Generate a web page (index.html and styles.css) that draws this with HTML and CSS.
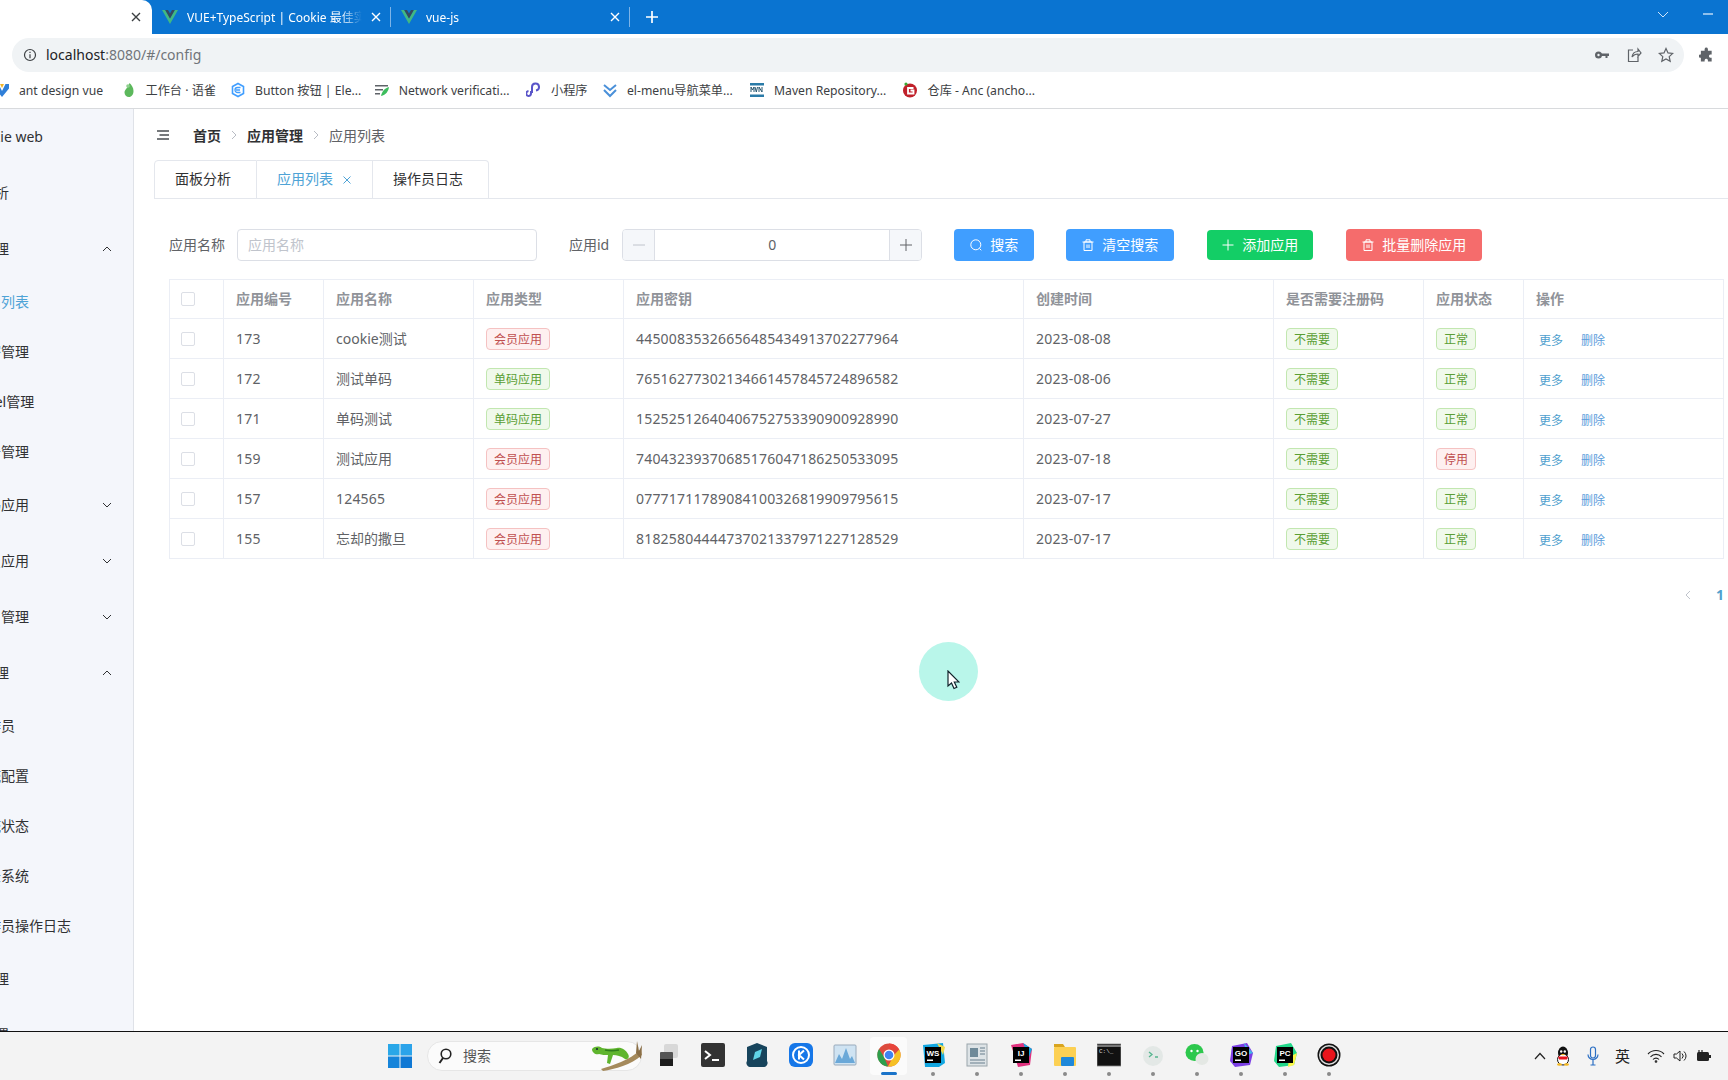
FILE: index.html
```html
<!DOCTYPE html>
<html lang="zh-CN">
<head>
<meta charset="utf-8">
<title>Cookie web</title>
<link rel="stylesheet" href="styles.css">
</head>
<body>
<div class="screen">
  <div class="tabstrip">
    <div class="ctab ctab-active"><svg class="ctab-x dark" viewBox="0 0 10 10"><path d="M1 1l8 8M9 1l-8 8"/></svg></div>
    <div class="ctab">
      <svg class="fav" viewBox="0 0 16 16"><path d="M0 1h3.2L8 9.4 12.800 1H16L8 15z" fill="#41b883"/><path d="M3.200 1h2.800L8 4.500 10 1h2.800L8 9.400z" fill="#35495e"/></svg>
      <span class="ctab-title">VUE+TypeScript | Cookie 最佳实践</span>
      <svg class="ctab-x" viewBox="0 0 10 10"><path d="M1 1l8 8M9 1l-8 8"/></svg>
    </div>
    <div class="ctab">
      <svg class="fav" viewBox="0 0 16 16"><path d="M0 1h3.2L8 9.4 12.800 1H16L8 15z" fill="#41b883"/><path d="M3.200 1h2.800L8 4.500 10 1h2.800L8 9.400z" fill="#35495e"/></svg>
      <span class="ctab-title">vue-js</span>
      <svg class="ctab-x" viewBox="0 0 10 10"><path d="M1 1l8 8M9 1l-8 8"/></svg>
    </div>
    <svg class="newtab" viewBox="0 0 12 12"><path d="M6 0v12M0 6h12"/></svg>
    <svg class="tabsearch" viewBox="0 0 10 6"><path d="M0 0l5 5 5-5"/></svg>
    <svg class="winmin" viewBox="0 0 10 2"><path d="M0 1h10"/></svg>
  </div>

  <div class="toolbar">
    <div class="omnibox">
      <svg class="ico-info" viewBox="0 0 14 14"><circle cx="7" cy="7" r="5.500"/><path d="M7 6.200v4M7 3.800v1.200"/></svg>
      <span class="url"><b>localhost</b>:8080/#/config</span>
      <div class="omni-actions">
        <svg class="omni-ico" viewBox="0 0 16 16"><circle cx="4.500" cy="8" r="3.500" fill="#5f6368"/><circle cx="4.500" cy="8" r="1.200" fill="#f0f3f5"/><path d="M7 6.500h8v2.500h-1.500v2h-2V9H7z" fill="#5f6368"/></svg>
        <svg class="omni-ico line" viewBox="0 0 16 16"><path d="M7 3H2.500v11.500H12V10"/><path d="M6 10c.5-3.500 3-5.500 6-5.500V2l3 4-3 3.500V7c-2.500 0-4.500 1-6 3z"/></svg>
        <svg class="omni-ico line" viewBox="0 0 16 16"><path d="M8 1.500l2 4.400 4.700.5-3.500 3.200 1 4.700L8 11.900l-4.200 2.400 1-4.700L1.300 6.400 6 5.900z"/></svg>
      </div>
    </div>
    <svg class="puzzle" viewBox="0 0 16 16"><path d="M6 1.500a1.800 1.800 0 0 1 3.500 0V3.500h4v4h-1.500a1.800 1.800 0 0 0 0 3.500h1.500v4h-4V13.500a1.800 1.800 0 0 0-3.500 0V15H2v-4H1a1.800 1.800 0 0 1 0-3.500h1v-4h4z" fill="#5f6368"/></svg>
  </div>

  <div class="bookmarks">
    <div class="bm"><svg class="bm-ico" viewBox="0 0 16 16"><path d="M1 2h3.500L8 9l3.500-7H15v4.500L8 15 1 6.500z" fill="#2f7fd8"/><path d="M6 2h4L8 6z" fill="#f0b429"/></svg><span>ant design vue</span></div>
    <div class="bm"><svg class="bm-ico" viewBox="0 0 16 16"><path d="M8.500 1c2 2 4 4.500 4 8s-2 6-4.500 6S3.500 13 3.500 10.500C3.500 7.500 7 6 8.500 1z" fill="#5cb85c"/><circle cx="7" cy="4" r="1.800" fill="#8fd18f"/></svg><span>工作台 · 语雀</span></div>
    <div class="bm"><svg class="bm-ico" viewBox="0 0 16 16"><path d="M8 1.500l5.500 3v7L8 14.500l-5.500-3v-7z" fill="none" stroke="#409eff" stroke-width="1.600"/><path d="M10.500 5.500H7.500a2.500 2.500 0 0 0 0 5h3M6 8h4" fill="none" stroke="#409eff" stroke-width="1.300"/></svg><span>Button 按钮 | Ele...</span></div>
    <div class="bm"><svg class="bm-ico" viewBox="0 0 16 16"><path d="M1 3h13v1.600H1zM1 7h8v1.600H1zM1 11h5v1.600H1z" fill="#5f6368"/><path d="M7 14c1-5 4-8 8-9-.5 4-3 8-8 9z" fill="#3dbd5d"/></svg><span>Network verificati...</span></div>
    <div class="bm"><svg class="bm-ico" viewBox="0 0 16 16"><path d="M3 14a2.500 2.500 0 0 1-.5-5M5 9v2.500A2.500 2.500 0 0 1 3 14M6 11V5a3.500 3.500 0 1 1 4 3.500" fill="none" stroke="#5a55c9" stroke-width="2"/></svg><span>小程序</span></div>
    <div class="bm"><svg class="bm-ico" viewBox="0 0 16 16"><path d="M2 3l6 5 6-5M2 8l6 6 6-6" fill="none" stroke="#4a90d9" stroke-width="2"/></svg><span>el-menu导航菜单...</span></div>
    <div class="bm"><svg class="bm-ico" viewBox="0 0 16 16"><rect x="1" y="1" width="14" height="14" fill="#fff"/><path d="M1 1h14v2.500H1zM1 12.500h14V15H1z" fill="#2a7ba8"/><path d="M2 10V5l1.500 3L5 5v5M6 5l1.300 5L8.500 5M10 10V5l3 5V5" fill="none" stroke="#27566f" stroke-width="1"/></svg><span>Maven Repository...</span></div>
    <div class="bm"><svg class="bm-ico" viewBox="0 0 16 16"><circle cx="8" cy="8.500" r="7" fill="#c0202a"/><path d="M11.500 6H6v5.500h5.500V8.500H8.500" fill="none" stroke="#fff" stroke-width="1.800"/><circle cx="4" cy="2" r="1.600" fill="#3aaa35"/></svg><span>仓库 - Anc (ancho...</span></div>
  </div>

  <div class="workspace">
    <aside class="sidebar">
      <nav class="menu">
        <div class="logo">Cookie web</div>
        <div class="mi">面板分析</div>
        <div class="mi">应用管理<svg class="chev" viewBox="0 0 10 6"><path d="M1 5l4-4 4 4"/></svg></div>
        <div class="si si-active">应用列表</div>
        <div class="si">卡密管理</div>
        <div class="si">Excel管理</div>
        <div class="si">公告管理</div>
        <div class="mi mi-deep">单码应用<svg class="chev" viewBox="0 0 10 6"><path d="M1 1l4 4 4-4"/></svg></div>
        <div class="mi mi-deep">会员应用<svg class="chev" viewBox="0 0 10 6"><path d="M1 1l4 4 4-4"/></svg></div>
        <div class="mi mi-deep">用户管理<svg class="chev" viewBox="0 0 10 6"><path d="M1 1l4 4 4-4"/></svg></div>
        <div class="mi">系统管理<svg class="chev" viewBox="0 0 10 6"><path d="M1 5l4-4 4 4"/></svg></div>
        <div class="si">操作员</div>
        <div class="si">系统配置</div>
        <div class="si">系统状态</div>
        <div class="si">登录系统</div>
        <div class="si">操作员操作日志</div>
        <div class="mi">权限管理</div>
        <div class="mi">系统设置</div>
      </nav>
    </aside>

    <main class="main">
      <div class="crumbs">
        <svg class="burger" viewBox="0 0 12 10"><path d="M0 1h12M2.500 5H12M0 9h12"/></svg>
        <b>首页</b>
        <svg class="crumb-sep" viewBox="0 0 6 10"><path d="M1 1l4 4-4 4"/></svg>
        <b>应用管理</b>
        <svg class="crumb-sep" viewBox="0 0 6 10"><path d="M1 1l4 4-4 4"/></svg>
        <span>应用列表</span>
      </div>

      <div class="pagetabs">
        <div class="ptab">面板分析</div>
        <div class="ptab ptab-active">应用列表<svg class="ptab-x" viewBox="0 0 8 8"><path d="M.5.5l7 7M7.500.5l-7 7"/></svg></div>
        <div class="ptab">操作员日志</div>
      </div>

      <div class="filters">
        <label class="flabel">应用名称</label>
        <div class="finput">应用名称</div>
        <label class="flabel flabel-next">应用id</label>
        <div class="fnum">
          <span class="fnum-btn fnum-l"><svg class="fnum-ico muted" viewBox="0 0 12 12"><path d="M0 6h12"/></svg></span>
          <span class="fnum-val">0</span>
          <span class="fnum-btn fnum-r"><svg class="fnum-ico" viewBox="0 0 12 12"><path d="M6 0v12M0 6h12"/></svg></span>
        </div>
        <div class="btns">
          <button class="btn btn-blue"><svg class="btn-ico" viewBox="0 0 12 12"><circle cx="5.800" cy="5.800" r="5"/><path d="M9.500 9.500l1.800 1.800"/></svg>搜索</button>
          <button class="btn btn-blue"><svg class="btn-ico" viewBox="0 0 12 12"><path d="M2 3h8v8.500H2zM.5 3h11M4 3V.8h4V3M5 5.500v3.500M7 5.500v3.500"/></svg>清空搜索</button>
          <button class="btn btn-green"><svg class="btn-ico" viewBox="0 0 12 12"><path d="M6 .5v11M.5 6h11"/></svg>添加应用</button>
          <button class="btn btn-red"><svg class="btn-ico" viewBox="0 0 12 12"><path d="M2 3h8v8.500H2zM.5 3h11M4 3V.8h4V3M5 5.500v3.500M7 5.500v3.500"/></svg>批量删除应用</button>
        </div>
      </div>

      <table class="grid">
        <colgroup>
          <col class="c54"><col class="c100"><col class="c150"><col class="c150"><col class="c400"><col class="c250"><col class="c150"><col class="c100"><col class="c200">
        </colgroup>
        <thead>
          <tr><th class="chk"><span class="box"></span></th><th>应用编号</th><th>应用名称</th><th>应用类型</th><th>应用密钥</th><th>创建时间</th><th>是否需要注册码</th><th>应用状态</th><th>操作</th></tr>
        </thead>
        <tbody>
          <tr><td class="chk"><span class="box"></span></td><td class="num">173</td><td class="txt">cookie测试</td><td><span class="tag red">会员应用</span></td><td class="num">44500835326656485434913702277964</td><td class="num">2023-08-08</td><td><span class="tag green">不需要</span></td><td><span class="tag green">正常</span></td><td><a class="lnk more">更多</a><a class="lnk del">删除</a></td></tr>
          <tr><td class="chk"><span class="box"></span></td><td class="num">172</td><td class="txt">测试单码</td><td><span class="tag green">单码应用</span></td><td class="num">76516277302134661457845724896582</td><td class="num">2023-08-06</td><td><span class="tag green">不需要</span></td><td><span class="tag green">正常</span></td><td><a class="lnk more">更多</a><a class="lnk del">删除</a></td></tr>
          <tr><td class="chk"><span class="box"></span></td><td class="num">171</td><td class="txt">单码测试</td><td><span class="tag green">单码应用</span></td><td class="num">15252512640406752753390900928990</td><td class="num">2023-07-27</td><td><span class="tag green">不需要</span></td><td><span class="tag green">正常</span></td><td><a class="lnk more">更多</a><a class="lnk del">删除</a></td></tr>
          <tr><td class="chk"><span class="box"></span></td><td class="num">159</td><td class="txt">测试应用</td><td><span class="tag red">会员应用</span></td><td class="num">74043239370685176047186250533095</td><td class="num">2023-07-18</td><td><span class="tag green">不需要</span></td><td><span class="tag red">停用</span></td><td><a class="lnk more">更多</a><a class="lnk del">删除</a></td></tr>
          <tr><td class="chk"><span class="box"></span></td><td class="num">157</td><td class="num">124565</td><td><span class="tag red">会员应用</span></td><td class="num">07771711789084100326819909795615</td><td class="num">2023-07-17</td><td><span class="tag green">不需要</span></td><td><span class="tag green">正常</span></td><td><a class="lnk more">更多</a><a class="lnk del">删除</a></td></tr>
          <tr><td class="chk"><span class="box"></span></td><td class="num">155</td><td class="txt">忘却的撒旦</td><td><span class="tag red">会员应用</span></td><td class="num">81825804444737021337971227128529</td><td class="num">2023-07-17</td><td><span class="tag green">不需要</span></td><td><span class="tag green">正常</span></td><td><a class="lnk more">更多</a><a class="lnk del">删除</a></td></tr>
        </tbody>
      </table>

      <div class="pager">
        <svg class="pager-prev" viewBox="0 0 6 10"><path d="M5 1L1 5l4 4"/></svg>
        <b class="pager-cur">1</b>
      </div>

      <div class="cursor-halo"></div>
      <svg class="cursor" viewBox="0 0 13 20"><path d="M1 1v15l3.500-3 2.500 5.500 2.800-1.200-2.500-5.300h4.700z" fill="#fff" stroke="#10222a" stroke-width="1.200"/></svg>
    </main>
  </div>

  <footer class="taskbar">
    <svg class="winlogo" viewBox="0 0 24 24"><rect width="11.500" height="11.500" fill="#29a7e8"/><rect x="12.500" width="11.500" height="11.500" fill="#2ba3ea"/><rect y="12.500" width="11.500" height="11.500" fill="#1584da"/><rect x="12.500" y="12.500" width="11.500" height="11.500" fill="#0f78d4"/></svg>
    <div class="search">
      <svg class="search-ico" viewBox="0 0 14 16"><circle cx="8" cy="6" r="4.800" fill="none" stroke="#222" stroke-width="1.600"/><path d="M5 10l-3.500 5" stroke="#222" stroke-width="2"/></svg>
      <span>搜索</span>
      <svg class="gecko" viewBox="0 0 52 30"><path d="M10 28C22 24 38 20 50 8l1 6C40 24 24 28 12 30z" fill="#a58a5c"/><path d="M46 0l2 10 3-6-1 14-5-6z" fill="#8a6f47"/><path d="M1 8c3-3 7-3 10-1 4 1 10 1 15 0 4-1 9 2 11 6 2 3 0 6-3 5-4-3-8-4-12-4l-3 9-3-1 1-8c-3 0-6 0-9-1-3 1-7-1-7-5z" fill="#5fb52e"/><path d="M14 9c4 1 9 1 14 0" stroke="#2f7d1b" stroke-width="1.500" fill="none"/><circle cx="6" cy="8" r="1" fill="#123"/></svg>
    </div>
    <div class="apps">
      <div class="app"><svg viewBox="0 0 24 24"><rect x="7" y="1" width="14" height="14" rx="2" fill="#d8d8d8"/><rect x="3" y="9" width="13" height="14" rx="1" fill="#555"/><rect x="3" y="16" width="13" height="7" fill="#1c1c1c"/></svg></div>
      <div class="app"><svg viewBox="0 0 24 24"><rect width="24" height="24" rx="2" fill="#333"/><path d="M4 8l5 4-5 4" fill="none" stroke="#fff" stroke-width="2"/><path d="M11 17h7" stroke="#fff" stroke-width="2"/></svg></div>
      <div class="app"><svg viewBox="0 0 24 24"><path d="M12 0l10 4v14a4 4 0 0 1-4 6H6a4 4 0 0 1-4-6V4z" fill="#17445c"/><path d="M8 17l2-8 7-3-2 8z" fill="#5fd4e8"/></svg></div>
      <div class="app"><svg viewBox="0 0 24 24"><rect width="24" height="24" rx="6" fill="#1677e8"/><circle cx="12" cy="12" r="8" fill="none" stroke="#fff" stroke-width="2"/><path d="M10 7.500v9M15 7.500l-5 4.500 5 4.500" fill="none" stroke="#fff" stroke-width="2"/></svg></div>
      <div class="app"><svg viewBox="0 0 24 24"><rect x="1" y="2" width="22" height="20" rx="1" fill="#cfe3f2" stroke="#9ab" stroke-width="1"/><path d="M2 20l4-9 3 5 4-11 4 11 2-3 3 7z" fill="#6aa8d8"/></svg></div>
      <div class="app app-active"><svg viewBox="0 0 24 24"><circle cx="12" cy="12" r="11.500" fill="#dd4b3e"/><path d="M12 .5a11.500 11.500 0 0 1 10 6H12z" fill="#e8453c"/><path d="M22.200 6.500A11.500 11.500 0 0 1 11 23.500L17 12z" fill="#f6c026"/><path d="M11 23.500A11.500 11.500 0 0 1 2 6l5 8z" fill="#2d9f4c"/><circle cx="12" cy="12" r="5.500" fill="#fff"/><circle cx="12" cy="12" r="4.300" fill="#3f83f0"/></svg></div>
      <div class="app app-run"><svg viewBox="0 0 24 24"><path d="M2 2l20-2 2 20-6 4H4z" fill="#12a6e0"/><path d="M16 0l8 4-2 8z" fill="#f2d94e"/><rect x="4" y="4" width="16" height="16" fill="#000"/><text x="12" y="13" class="jb">WS</text><rect x="6" y="16.500" width="6" height="1.500" fill="#fff"/></svg></div>
      <div class="app app-run"><svg viewBox="0 0 24 24"><rect x="2" y="1" width="20" height="22" fill="#dde3e6" stroke="#9aa5ab" stroke-width="1"/><rect x="5" y="5" width="8" height="9" fill="#6f8a99"/><path d="M15 5h5M15 8h5M15 11h5M5 17h15M5 20h15" stroke="#8fa0aa" stroke-width="1.300"/></svg></div>
      <div class="app app-run"><svg viewBox="0 0 24 24"><path d="M2 2l12-2 9 6-2 16-12 2z" fill="#e0317e"/><path d="M14 0l9 6-3 8z" fill="#12a6e0"/><rect x="4" y="4" width="16" height="16" fill="#000"/><text x="12" y="13" class="jb">IJ</text><rect x="6" y="16.500" width="6" height="1.500" fill="#fff"/></svg></div>
      <div class="app app-run"><svg viewBox="0 0 24 24"><path d="M1 1h9l2 3h-11z" fill="#d9a520"/><rect x="1" y="4" width="22" height="19" rx="1" fill="#fcd053"/><rect x="8" y="14" width="13" height="9" rx="1" fill="#1f88d9"/></svg></div>
      <div class="app app-run"><svg viewBox="0 0 24 24"><rect y="1" width="24" height="22" fill="#111" stroke="#888" stroke-width=".8"/><path d="M0 3h24" stroke="#ddd" stroke-width="1"/><text x="2" y="10" class="cmd">C:\_</text></svg></div>
      <div class="app app-run"><svg viewBox="0 0 24 24"><circle cx="12" cy="13" r="10" fill="#e3e8e6"/><path d="M8 9l3 2.500-3 2.500M14 14h3" fill="none" stroke="#55b58f" stroke-width="1.300"/></svg></div>
      <div class="app app-run"><svg viewBox="0 0 24 24"><ellipse cx="9.500" cy="9.500" rx="9" ry="8.500" fill="#2dc84d"/><ellipse cx="17" cy="16" rx="6.500" ry="6" fill="#e4e8e4"/><circle cx="6.500" cy="8" r="1.200" fill="#fff"/><circle cx="12.500" cy="8" r="1.200" fill="#fff"/></svg></div>
      <div class="app app-run"><svg viewBox="0 0 24 24"><path d="M3 3l15-3 6 10-3 12-15 2-5-6z" fill="#7b3fe4"/><path d="M15 0l9 10-6 2z" fill="#3fb8e8"/><rect x="4" y="4" width="16" height="16" fill="#000"/><text x="12" y="13" class="jb">GO</text><rect x="6" y="16.500" width="6" height="1.500" fill="#fff"/></svg></div>
      <div class="app app-run"><svg viewBox="0 0 24 24"><path d="M3 3l15-3 6 10-3 12-15 2-5-6z" fill="#21d789"/><path d="M16 14l8-4-3 12-6 2z" fill="#fcf84a"/><rect x="4" y="4" width="16" height="16" fill="#000"/><text x="12" y="13" class="jb">PC</text><rect x="6" y="16.500" width="6" height="1.500" fill="#fff"/></svg></div>
      <div class="app app-run"><svg viewBox="0 0 24 24"><circle cx="12" cy="12" r="11.500" fill="#111"/><circle cx="12" cy="12" r="10" fill="#ddd"/><circle cx="12" cy="12" r="8.500" fill="#111"/><circle cx="12" cy="12" r="6.500" fill="#e8141c"/></svg></div>
    </div>
    <div class="tray">
      <svg class="t-caret" viewBox="0 0 12 8"><path d="M1 7l5-5.500L11 7"/></svg>
      <svg class="t-qq" viewBox="0 0 14 20"><ellipse cx="7" cy="7" rx="5" ry="6.500" fill="#111"/><ellipse cx="7" cy="13.500" rx="5.500" ry="5.500" fill="#fff" stroke="#111" stroke-width="1"/><path d="M2 10.500h10l-1 3H3z" fill="#e8141c"/><circle cx="5.200" cy="5.500" r="1.200" fill="#fff"/><circle cx="8.800" cy="5.500" r="1.200" fill="#fff"/><path d="M4.500 8h5L7 9.500z" fill="#f5b921"/><ellipse cx="3.500" cy="18.500" rx="2.500" ry="1.300" fill="#f5b921"/><ellipse cx="10.500" cy="18.500" rx="2.500" ry="1.300" fill="#f5b921"/></svg>
      <svg class="t-mic" viewBox="0 0 12 20"><rect x="3.500" y="1" width="5" height="11" rx="2.500"/><path d="M1 8.500a5 5 0 0 0 10 0M6 14v5M3.500 19h5"/></svg>
      <span class="t-lang">英</span>
      <svg class="t-wifi" viewBox="0 0 18 14"><path d="M1 5a11 11 0 0 1 16 0M3.500 7.800a7.500 7.500 0 0 1 11 0M6 10.500a4 4 0 0 1 6 0"/><circle cx="9" cy="12.500" r=".8"/></svg>
      <svg class="t-vol" viewBox="0 0 14 14"><path d="M1 5h2.500L7 2v10L3.500 9H1zM9 4.500a3.500 3.500 0 0 1 0 5M11 2.500a6 6 0 0 1 0 9"/></svg>
      <svg class="t-bat" viewBox="0 0 16 12"><rect x="1" y="2" width="12" height="9" rx="1.500" fill="#222"/><rect x="13" y="5" width="2" height="3" fill="#222"/><path d="M3 0v4M6 0v4" stroke="#222" stroke-width="1.200"/></svg>
    </div>
  </footer>
</div>
</body>
</html>
```

FILE: styles.css
```css
* { box-sizing: border-box; }
html, body { margin: 0; padding: 0; }
body {
  font-family: "Noto Sans", "Noto Sans CJK SC", sans-serif;
  font-size: 14px;
  color: #606266;
  background: #fff;
}
.screen {
  width: 1728px;
  height: 1080px;
  display: flex;
  flex-direction: column;
  overflow: hidden;
}

/* browser tab strip */
.tabstrip {
  height: 34px;
  flex: none;
  background: #0a74d1;
  display: flex;
  align-items: center;
  position: relative;
}
.ctab {
  width: 239px;
  height: 34px;
  display: flex;
  align-items: center;
  padding: 0 10px;
  gap: 9px;
  color: #fff;
  font-size: 12px;
  position: relative;
}
.ctab:not(.ctab-active)::after {
  content: "";
  position: absolute;
  right: 0;
  top: 7px;
  height: 20px;
  width: 1px;
  background: #7db4e8;
}
.ctab-active {
  width: 152px;
  background: #fff;
  border-radius: 0 10px 0 0;
  justify-content: flex-end;
  padding-right: 11px;
}
.fav { width: 16px; height: 16px; flex: none; }
.ctab-title {
  flex: 1;
  min-width: 0;
  white-space: nowrap;
  overflow: hidden;
  -webkit-mask-image: linear-gradient(90deg, #000 88%, transparent 100%);
  mask-image: linear-gradient(90deg, #000 88%, transparent 100%);
}
.ctab-x {
  width: 10px;
  height: 10px;
  flex: none;
  fill: none;
  stroke: #fff;
  stroke-width: 1.400;
}
.ctab-x.dark { stroke: #3c4043; }
.newtab {
  width: 12px;
  height: 12px;
  margin-left: 16px;
  fill: none;
  stroke: #fff;
  stroke-width: 1.700;
}
.tabsearch {
  width: 10px;
  height: 6px;
  margin-left: auto;
  margin-top: -5px;
  fill: none;
  stroke: #cfe5fa;
  stroke-width: 1;
}
.winmin {
  width: 10px;
  height: 2px;
  margin: -6px 15px 0 35px;
  fill: none;
  stroke: #e8f3fd;
  stroke-width: 1.200;
}

/* address bar */
.toolbar {
  height: 38px;
  flex: none;
  padding-top: 4px;
  display: flex;
  background: #fff;
}
.omnibox {
  width: 1672px;
  height: 34px;
  margin-left: 12px;
  border-radius: 17px;
  background: #f0f3f5;
  display: flex;
  align-items: center;
  padding-left: 11px;
}
.ico-info {
  width: 14px;
  height: 14px;
  fill: none;
  stroke: #3c4043;
  stroke-width: 1.200;
}
.url {
  margin-left: 9px;
  margin-bottom: 2px;
  font-size: 14px;
  color: #70757a;
}
.url b { font-weight: 400; color: #202124; }
.omni-actions {
  margin-left: auto;
  margin-right: 10px;
  display: flex;
  gap: 16px;
}
.omni-ico { width: 16px; height: 16px; }
.omni-ico.line { fill: none; stroke: #5f6368; stroke-width: 1.200; }
.puzzle { width: 15px; height: 16px; margin: 9px 0 0 15px; }

/* bookmarks */
.bookmarks {
  height: 37px;
  flex: none;
  border-bottom: 1px solid #d8dadd;
  display: grid;
  grid-template-columns: 126.500px 109.500px 143.700px 152.300px 76px 147px 153.500px auto;
  margin-left: -6px;
  align-items: center;
  background: #fff;
}
.bm {
  display: flex;
  align-items: center;
  gap: 9px;
  font-size: 12.200px;
  color: #3c4043;
  white-space: nowrap;
}
.bm-ico { width: 16px; height: 16px; flex: none; }

/* workspace */
.workspace {
  height: 922px;
  flex: none;
  display: flex;
  overflow: hidden;
  position: relative;
}
.sidebar {
  width: 134px;
  flex: none;
  background: #f4f6fb;
  border-right: 1px solid #dfe2e8;
  overflow: hidden;
  color: #303133;
}
.menu { margin-left: -47px; width: 180px; }
.logo {
  height: 56px;
  line-height: 56px;
  padding-left: 14px;
  white-space: nowrap;
}
.mi, .si {
  display: flex;
  align-items: center;
  white-space: nowrap;
  position: relative;
  padding-bottom: 2px;
}
.mi { height: 56px; }
.mi-deep { padding-left: 20px; }
.si { height: 50px; padding-left: 20px; }
.si-active { color: #4ea3d6; }
.chev {
  position: absolute;
  left: 149px;
  top: 25px;
  width: 10px;
  height: 6px;
  fill: none;
  stroke: #303133;
  stroke-width: 1;
}

.main {
  flex: 1;
  min-width: 0;
  padding-left: 20px;
  position: relative;
  overflow: hidden;
}
.crumbs {
  height: 51px;
  padding: 1px 0 0 3px;
  display: flex;
  align-items: center;
  color: #606266;
}
.crumbs b { font-weight: 700; color: #303133; }
.burger {
  width: 12px;
  height: 10px;
  margin-right: 24px;
  fill: none;
  stroke: #4a4d52;
  stroke-width: 1.400;
}
.crumb-sep {
  width: 6px;
  height: 10px;
  margin: 0 10px;
  fill: none;
  stroke: #b8bcc4;
  stroke-width: 1;
}
.pagetabs {
  height: 39px;
  display: flex;
  border-bottom: 1px solid #e4e7ed;
}
.ptab {
  height: 39px;
  padding: 0 25px 3px 20px;
  display: flex;
  align-items: center;
  color: #303133;
  border: 1px solid #e4e7ed;
  border-left: 0;
  white-space: nowrap;
}
.ptab:first-child { border-left: 1px solid #e4e7ed; border-radius: 4px 0 0 0; }
.ptab:last-child { border-radius: 0 4px 0 0; }
.ptab-active { color: #4ea3d6; }
.ptab-x {
  width: 8px;
  height: 8px;
  margin: 4px -4px 0 10px;
  fill: none;
  stroke: #4ea3d6;
  stroke-width: 1;
}

.filters {
  margin-top: 30px;
  padding-left: 15px;
  display: flex;
  align-items: center;
  height: 32px;
}
.flabel { color: #606266; white-space: nowrap; padding-bottom: 2px; }
.flabel-next { margin-left: 32px; }
.finput {
  width: 300px;
  height: 32px;
  margin-left: 12px;
  padding: 0 0 2px 10px;
  display: flex;
  align-items: center;
  border: 1px solid #dcdfe6;
  border-radius: 4px;
  color: #c0c4cc;
}
.fnum {
  width: 300px;
  height: 32px;
  margin-left: 13px;
  display: flex;
  border: 1px solid #dcdfe6;
  border-radius: 4px;
  overflow: hidden;
}
.fnum-btn {
  width: 32px;
  flex: none;
  background: #f5f7fa;
  display: flex;
  align-items: center;
  justify-content: center;
}
.fnum-ico {
  width: 12px;
  height: 12px;
  fill: none;
  stroke: #606266;
  stroke-width: 1;
}
.fnum-ico.muted { stroke: #c0c4cc; }
.fnum-l { border-right: 1px solid #dcdfe6; }
.fnum-r { border-left: 1px solid #dcdfe6; }
.fnum-val { flex: 1; text-align: center; line-height: 29px; }
.btns {
  margin-left: 32px;
  display: flex;
  align-items: center;
  gap: 32px;
}
.btn {
  height: 32px;
  padding: 0 16px 2px;
  display: inline-flex;
  align-items: center;
  gap: 8px;
  border: 0;
  border-radius: 4px;
  color: #fff;
  font: inherit;
  white-space: nowrap;
}
.btn-blue { background: #409eff; }
.btn-green { background: #13ce66; height: 30px; padding: 0 15px 2px; margin: 0 1px; }
.btn-red { background: #f56c6c; }
.btn-ico {
  width: 12px;
  height: 12px;
  margin-top: 2px;
  fill: none;
  stroke: #fff;
  stroke-width: 1;
}

.grid {
  margin: 18px 0 0 15px;
  width: 1555px;
  table-layout: fixed;
  border-collapse: separate;
  border-spacing: 0;
  border-top: 1px solid #ebeef5;
  border-left: 1px solid #ebeef5;
}
.c54 { width: 54px; }
.c100 { width: 100px; }
.c150 { width: 150px; }
.c200 { width: 200px; }
.c250 { width: 250px; }
.c400 { width: 400px; }
.grid th, .grid td {
  padding: 0 12px;
  text-align: left;
  border-right: 1px solid #ebeef5;
  border-bottom: 1px solid #ebeef5;
  white-space: nowrap;
  overflow: hidden;
}
.grid th { height: 39px; padding-bottom: 2px; color: #909399; font-weight: 700; }
.grid td { height: 40px; color: #606266; }
.grid .chk { padding: 0 11px; }
.grid .txt { padding-bottom: 2px; }
.num { letter-spacing: .19px; }
.box {
  display: block;
  width: 14px;
  height: 14px;
  border: 1px solid #dcdfe6;
  border-radius: 2px;
  background: #fff;
}
.tag {
  display: inline-flex;
  align-items: center;
  height: 22px;
  padding: 0 7px;
  margin-top: 1px;
  vertical-align: middle;
  border: 1px solid;
  border-radius: 4px;
  font-size: 12px;
}
.tag.green { background: #f0f9eb; border-color: #c2e7b0; color: #5a9e34; }
.tag.red { background: #fef0f0; border-color: #f5c2c2; color: #c04f4f; }
.lnk {
  display: inline-block;
  margin: 2px 0 0 3px;
  font-size: 12px;
}
.lnk.more { color: #4f9fce; }
.lnk.del { color: #5c9ddc; margin-left: 18px; }

.pager {
  height: 71px;
  padding-right: 4px;
  display: flex;
  align-items: center;
  justify-content: flex-end;
  gap: 26px;
}
.pager-prev {
  width: 6px;
  height: 10px;
  margin-left: 0;
  transform: translateX(1px);
  fill: none;
  stroke: #c0c4cc;
  stroke-width: 1;
}
.pager-cur { color: #4f9fce; }

.cursor-halo {
  position: absolute;
  left: 785px;
  top: 533px;
  width: 59px;
  height: 59px;
  border-radius: 50%;
  background: #b9f6ea;
}
.cursor {
  position: absolute;
  left: 813px;
  top: 561px;
  width: 13px;
  height: 20px;
}

/* windows taskbar */
.taskbar {
  height: 49px;
  flex: none;
  border-top: 1px solid #111;
  background: #f3f3f3;
  display: flex;
  align-items: center;
  padding-left: 388px;
  overflow: hidden;
}
.winlogo { width: 24px; height: 24px; flex: none; }
.search {
  width: 215px;
  height: 30px;
  margin-left: 15px;
  padding-left: 10px;
  flex: none;
  background: #fbfbfb;
  border: 1px solid #e6e6e6;
  border-radius: 15px;
  display: flex;
  align-items: center;
  color: #555;
  font-size: 14px;
}
.search span { margin: 0 0 2px 11px; }
.search-ico { width: 14px; height: 16px; flex: none; }
.gecko { width: 52px; height: 30px; margin-left: auto; margin-right: -2px; flex: none; }
.apps { display: flex; margin-left: 5px; flex: none; }
.app {
  width: 44px;
  height: 48px;
  display: flex;
  align-items: center;
  justify-content: center;
  position: relative;
  flex: none;
}
.app svg { width: 24px; height: 24px; margin-top: -2px; }
.app-active::before {
  content: "";
  position: absolute;
  left: 3px;
  top: 5px;
  width: 37px;
  height: 38px;
  background: #fbfbfb;
  border-radius: 4px;
}
.app-active svg { position: relative; }
.app-active::after {
  content: "";
  position: absolute;
  left: 14px;
  top: 40px;
  width: 16px;
  height: 3px;
  border-radius: 2px;
  background: #1a73c9;
}
.app-run::after {
  content: "";
  position: absolute;
  left: 20px;
  top: 40px;
  width: 4px;
  height: 4px;
  border-radius: 50%;
  background: #8a8a8a;
}
.jb {
  font: 700 8px "Liberation Sans", sans-serif;
  fill: #fff;
  text-anchor: middle;
}
.cmd {
  font: 6px "Liberation Mono", monospace;
  fill: #ddd;
}
.tray {
  margin-left: auto;
  margin-right: 16px;
  display: flex;
  align-items: center;
  flex: none;
}
.t-caret { width: 12px; height: 8px; fill: none; stroke: #222; stroke-width: 1.200; }
.t-qq { width: 14px; height: 20px; margin-left: 10px; }
.t-mic { width: 12px; height: 20px; margin-left: 16.500px; fill: none; stroke: #2b6fc4; stroke-width: 1.200; }
.t-lang { width: 16px; margin-left: 16.500px; font-size: 15px; color: #222; line-height: 20px; }
.t-wifi { width: 18px; height: 14px; margin-left: 16px; fill: none; stroke: #222; stroke-width: 1.100; }
.t-vol { width: 14px; height: 14px; margin-left: 7.500px; fill: none; stroke: #222; stroke-width: 1; }
.t-bat { width: 16px; height: 12px; margin-left: 9.500px; }
```
